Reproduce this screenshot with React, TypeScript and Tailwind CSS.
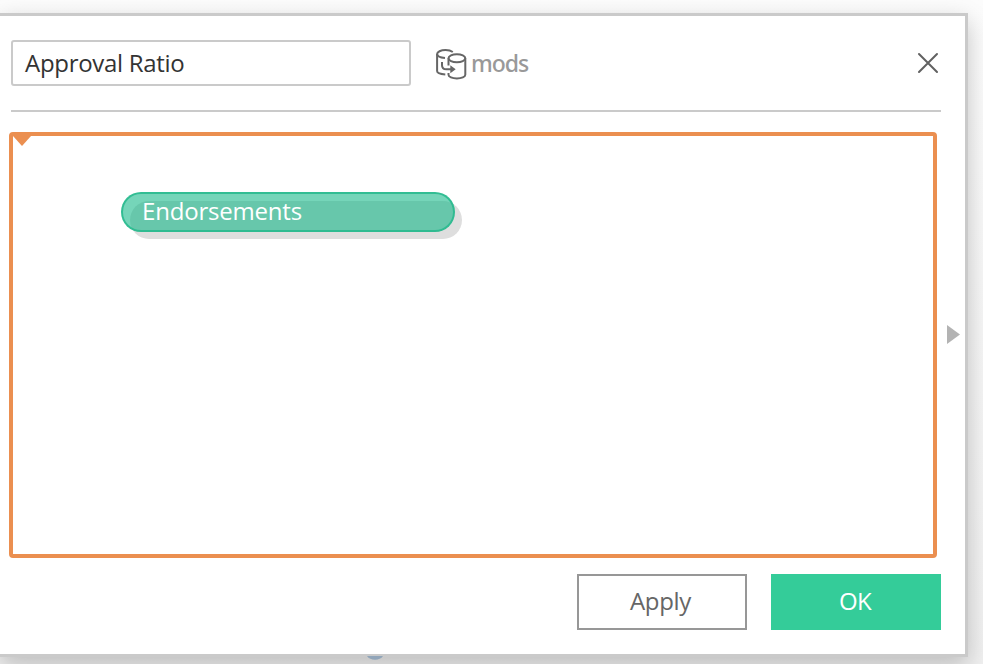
function DataSourceIcon() {
  return (
    <svg className="mt-px h-8 w-8 shrink-0" viewBox="-1 -1 32 32" fill="none" stroke="#666" strokeWidth="2">
      <ellipse cx="20.9" cy="9.2" rx="8.4" ry="4" />
      <path d="M12.5 9.3v7.2M12.5 23.9v1.8c0 2.1 3.7 3.7 8.4 3.7s8.4-1.6 8.4-3.7V9.3" />
      <path d="M16.8 3C15 1.7 12.2 1.1 9.6 1.1 4.7 1.1 1.1 2.8 1.1 5.1s3.4 3.6 7.9 4" />
      <path d="M1.1 5.1v17c0 1.9 3.2 3.1 8.2 3.4" />
      <path d="M6 13.1v3.1c0 2.7 1.6 4.1 4.3 4.1h5" />
      <path d="M14.3 16.3v8l5.4-4z" fill="#666" stroke="none" />
    </svg>
  );
}

export default function App() {
  return (
    <div className="h-[664px] w-[983px] overflow-hidden bg-[#f6f6f6] bg-linear-to-b from-[#fcfcfc] to-[#f0f0f0] pt-[13px] font-['Open_Sans',sans-serif]">
      <div className="relative flex h-[644px] w-[968px] flex-col border-y-[3px] border-r-[3px] border-[#cacaca] bg-white shadow-[0_8px_22px_rgba(0,0,0,0.22)]">
        <header className="ml-[11px] mr-6 flex h-24 items-start border-b-2 border-[#cacaca] pt-6">
          <div className="flex h-[46px] w-[400px] items-center rounded-[3px] border-2 border-[#cacaca] pl-3 text-[24px] tracking-[-0.3px] text-[#333]">
            Approval Ratio
          </div>
          <div className="ml-6 flex h-[46px] items-center gap-1">
            <DataSourceIcon />
            <span className="font-['Noto_Sans',sans-serif] text-[23px] font-medium leading-[30px] tracking-[-1px] text-[#999]">mods</span>
          </div>
          <button className="ml-auto mr-0.5 mt-3" aria-label="Close">
            <svg className="h-[22px] w-[22px]" viewBox="0 0 22 22" stroke="#616161" strokeWidth="2" strokeLinecap="round">
              <path d="M2 2l18 18M20 2L2 20" />
            </svg>
          </button>
        </header>

        <main className="relative ml-[9px] mt-5 h-[426px] w-[928px] rounded-[4px] border-4 border-[#eb8f50] pl-[108px] pt-14">
          <svg className="absolute left-0 top-0 h-[10px] w-[18px]" viewBox="0 0 18 10">
            <path d="M0 0h18L9 10z" fill="#eb8f50" />
          </svg>
          <div className="relative h-10 w-[334px]">
            <div className="absolute left-[9px] top-[9px] h-[38px] w-[332px] rounded-full bg-[#dedede]" />
            <div className="relative flex h-10 items-center rounded-full border-2 border-[#22b88b]/80 bg-[#11b786]/58 pb-0.5 pl-[19px] text-[24px] tracking-[-0.2px] text-white">
              Endorsements
            </div>
          </div>
        </main>

        <footer className="mr-6 mt-4 flex justify-end gap-6 text-[24px]">
          <button className="h-14 w-[170px] border-2 border-[#979797] pb-0.5 pr-[3px] tracking-[-0.3px] text-[#666]">Apply</button>
          <button className="h-14 w-[170px] bg-[#34cc99] pb-0.5 pr-0.5 tracking-[-0.8px] text-white">OK</button>
        </footer>

        <svg className="absolute right-[5px] top-[309px] h-[19px] w-[13px]" viewBox="0 0 13 19">
          <path d="M0 0v19l13-9.5z" fill="#b3b3b3" />
        </svg>
        <svg className="absolute left-[367px] top-[640px] h-[5px] w-4" viewBox="0 0 16 5">
          <path d="M0 0h16C13 5 3 5 0 0z" fill="#91a5b9" />
        </svg>
      </div>
    </div>
  );
}
